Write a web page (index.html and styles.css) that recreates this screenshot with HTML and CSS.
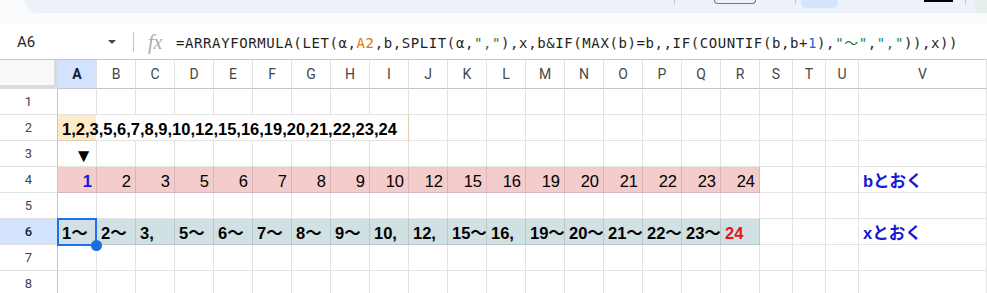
FILE: index.html
```html
<!DOCTYPE html>
<html lang="ja">
<head>
<meta charset="utf-8">
<title>Sheet</title>
<link rel="stylesheet" href="styles.css">
</head>
<body>
<div class="topbar">
  <div class="tbpill">
    <span class="tb-div d1"></span>
    <span class="tb-box"></span>
    <span class="tb-div d2"></span>
    <span class="tb-sel"></span>
    <span class="tb-black"></span>
    <span class="tb-div d3"></span>
    <span class="tb-end"></span>
  </div>
</div>
<div class="fbar">
  <div class="namebox">A6</div>
  <span class="dd"></span>
  <span class="fdiv"></span>
  <span class="fx">fx</span>
  <div class="formula">=ARRAYFORMULA(LET(α,<span class="ref">A2</span>,b,SPLIT(α,<span class="str">","</span>),x,b&amp;IF(MAX(b)=b,,IF(COUNTIF(b,b+<span class="num">1</span>),<span class="str">"〜"</span>,<span class="str">","</span>)),x))</div>
</div>
<div class="sheet">
  <!-- header row -->
  <div class="corner"></div>
  <div class="ch on">A</div><div class="ch">B</div><div class="ch">C</div><div class="ch">D</div><div class="ch">E</div><div class="ch">F</div><div class="ch">G</div><div class="ch">H</div><div class="ch">I</div><div class="ch">J</div><div class="ch">K</div><div class="ch">L</div><div class="ch">M</div><div class="ch">N</div><div class="ch">O</div><div class="ch">P</div><div class="ch">Q</div><div class="ch">R</div><div class="ch">S</div><div class="ch">T</div><div class="ch">U</div><div class="ch">V</div>

  <!-- row 1 -->
  <div class="rh">1</div>
  <div class="c"></div><div class="c"></div><div class="c"></div><div class="c"></div><div class="c"></div><div class="c"></div><div class="c"></div><div class="c"></div><div class="c"></div><div class="c"></div><div class="c"></div><div class="c"></div><div class="c"></div><div class="c"></div><div class="c"></div><div class="c"></div><div class="c"></div><div class="c"></div><div class="c"></div><div class="c"></div><div class="c"></div><div class="c"></div>

  <!-- row 2 -->
  <div class="rh">2</div>
  <div class="c src b">1,2,3,5,6,7,8,9,10,12,15,16,19,20,21,22,23,24</div>
  <div class="c"></div><div class="c"></div><div class="c"></div><div class="c"></div><div class="c"></div><div class="c"></div><div class="c"></div><div class="c"></div><div class="c"></div><div class="c"></div><div class="c"></div><div class="c"></div><div class="c"></div>

  <!-- row 3 -->
  <div class="rh">3</div>
  <div class="c r tri">▼</div>
  <div class="c"></div><div class="c"></div><div class="c"></div><div class="c"></div><div class="c"></div><div class="c"></div><div class="c"></div><div class="c"></div><div class="c"></div><div class="c"></div><div class="c"></div><div class="c"></div><div class="c"></div><div class="c"></div><div class="c"></div><div class="c"></div><div class="c"></div><div class="c"></div><div class="c"></div><div class="c"></div><div class="c"></div>

  <!-- row 4 -->
  <div class="rh">4</div>
  <div class="c pk r b blue">1</div><div class="c pk r">2</div><div class="c pk r">3</div><div class="c pk r">5</div><div class="c pk r">6</div><div class="c pk r">7</div><div class="c pk r">8</div><div class="c pk r">9</div><div class="c pk r">10</div><div class="c pk r">12</div><div class="c pk r">15</div><div class="c pk r">16</div><div class="c pk r">19</div><div class="c pk r">20</div><div class="c pk r">21</div><div class="c pk r">22</div><div class="c pk r">23</div><div class="c pk r">24</div>
  <div class="c"></div><div class="c"></div><div class="c"></div>
  <div class="c b blue">bとおく</div>

  <!-- row 5 -->
  <div class="rh">5</div>
  <div class="c"></div><div class="c"></div><div class="c"></div><div class="c"></div><div class="c"></div><div class="c"></div><div class="c"></div><div class="c"></div><div class="c"></div><div class="c"></div><div class="c"></div><div class="c"></div><div class="c"></div><div class="c"></div><div class="c"></div><div class="c"></div><div class="c"></div><div class="c"></div><div class="c"></div><div class="c"></div><div class="c"></div><div class="c"></div>

  <!-- row 6 -->
  <div class="rh on">6</div>
  <div class="c cy b a6">1〜<span class="sel"><span class="handle"></span></span></div><div class="c cy b">2〜</div><div class="c cy b">3,</div><div class="c cy b">5〜</div><div class="c cy b">6〜</div><div class="c cy b">7〜</div><div class="c cy b">8〜</div><div class="c cy b">9〜</div><div class="c cy b">10,</div><div class="c cy b">12,</div><div class="c cy b">15〜</div><div class="c cy b">16,</div><div class="c cy b">19〜</div><div class="c cy b">20〜</div><div class="c cy b">21〜</div><div class="c cy b">22〜</div><div class="c cy b">23〜</div><div class="c cy b red">24</div>
  <div class="c"></div><div class="c"></div><div class="c"></div>
  <div class="c b blue">xとおく</div>

  <!-- row 7 -->
  <div class="rh">7</div>
  <div class="c"></div><div class="c"></div><div class="c"></div><div class="c"></div><div class="c"></div><div class="c"></div><div class="c"></div><div class="c"></div><div class="c"></div><div class="c"></div><div class="c"></div><div class="c"></div><div class="c"></div><div class="c"></div><div class="c"></div><div class="c"></div><div class="c"></div><div class="c"></div><div class="c"></div><div class="c"></div><div class="c"></div><div class="c"></div>

  <!-- row 8 -->
  <div class="rh">8</div>
  <div class="c"></div><div class="c"></div><div class="c"></div><div class="c"></div><div class="c"></div><div class="c"></div><div class="c"></div><div class="c"></div><div class="c"></div><div class="c"></div><div class="c"></div><div class="c"></div><div class="c"></div><div class="c"></div><div class="c"></div><div class="c"></div><div class="c"></div><div class="c"></div><div class="c"></div><div class="c"></div><div class="c"></div><div class="c"></div>
</div>
</body>
</html>
```
FILE: styles.css
```css
* { box-sizing: border-box; }
html, body { margin: 0; padding: 0; }
body {
  width: 987px;
  height: 293px;
  overflow: hidden;
  background: #f9fbfd;
  font-family: Roboto, "Noto Sans", sans-serif;
  color: #1f1f1f;
}

/* top toolbar remnant */
.topbar { height: 24px; padding-left: 25px; }
.tbpill {
  height: 13px;
  background: #edf2fa;
  border-bottom-left-radius: 14px;
  display: flex;
  align-items: flex-start;
}
.tb-div { width: 1px; height: 4px; background: #c4c7c5; flex: none; }
.d1 { margin-left: 649px; }
.tb-box {
  margin-left: 39px; width: 42px; height: 4px; flex: none;
  border: 1px solid #747775; border-top: none;
  border-radius: 0 0 6px 6px;
}
.d2 { margin-left: 39px; }
.tb-sel {
  margin-left: 5px; width: 37px; height: 8px; flex: none;
  background: #d3e3fd; border-radius: 0 0 6px 6px;
}
.tb-black { margin-left: 86px; width: 29px; height: 2px; background: #000; flex: none; }
.d3 { margin-left: 12px; }
.tb-end { margin-left: 9px; width: 14px; height: 13px; background: #e6efec; flex: none; }

/* formula bar */
.fbar {
  height: 35px;
  background: #fff;
  display: flex;
  align-items: center;
  white-space: nowrap;
}
.namebox { width: 108px; padding-left: 17px; font-size: 15px; color: #1f1f1f; flex: none; }
.dd {
  width: 0; height: 0; flex: none;
  border-left: 4px solid transparent;
  border-right: 4px solid transparent;
  border-top: 4px solid #444746;
}
.fdiv { margin-left: 17px; width: 1px; height: 20px; background: #c4c7c5; flex: none; }
.fx {
  margin-left: 14px; width: 16px; flex: none;
  font-family: "Liberation Serif", serif;
  font-style: italic; font-size: 20px; color: #a8abae;
  line-height: 20px;
}
.formula {
  margin-left: 12px;
  font-family: "DejaVu Sans Mono", "Noto Sans CJK JP", monospace;
  font-size: 14px;
  letter-spacing: 0.6px;
  color: #1f1f1f;
}
.ref { color: #e8710a; }
.str { color: #188038; }
.num { color: #1967d2; }

/* sheet grid */
.sheet {
  display: grid;
  grid-template-columns: 58px repeat(18, 39px) repeat(3, 33px) 1fr;
  grid-template-rows: 30px repeat(8, 26px);
  background: #fff;
}
.corner {
  background: #f8f9fa;
  border-right: 4px solid #d9dbdd;
  border-bottom: 4px solid #d9dbdd;
  border-top: 1px solid #c4c7c5;
}
.ch {
  display: flex; align-items: center; justify-content: center;
  border-top: 1px solid #c4c7c5;
  border-right: 1px solid #e1e3e1;
  border-bottom: 1px solid #c4c7c5;
  font-size: 14px; color: #444746;
}
.rh {
  display: flex; align-items: center; justify-content: center;
  border-right: 1px solid #c4c7c5;
  border-bottom: 1px solid #e1e3e1;
  font-size: 13px; color: #444746;
}
.ch.on, .rh.on { background: #d3e3fd; color: #0b1f3a; font-weight: 700; }
.rh.on { font-weight: 500; }

.c {
  display: flex;
  align-items: flex-end;
  padding: 0 4px 1px;
  border-right: 1px solid rgba(0, 0, 0, 0.11);
  border-bottom: 1px solid rgba(0, 0, 0, 0.11);
  font-family: "Liberation Sans", "Noto Sans CJK JP", sans-serif;
  font-size: 16.5px;
  line-height: 19px;
  color: #000;
  white-space: nowrap;
  overflow: hidden;
}
.c.r { justify-content: flex-end; }
.c.b { font-weight: 700; }
.c.tri { font-size: 19px; padding-right: 3px; }
.c.src {
  grid-column: span 9;
  background: linear-gradient(to right, #fdeac6 38px, transparent 38px);
}
.c.pk { background: #f4cccc; }
.c.cy { background: #d0e0e3; }
.blue { color: #1717d4 !important; }
.red { color: #e5161b !important; }

/* selection on A6 */
.c.a6 { position: relative; overflow: visible; }
.sel {
  position: absolute;
  left: -1px; top: -1px; right: -1px; bottom: -2px;
  border: 2px solid #1a73e8;
  z-index: 2;
  pointer-events: none;
}
.handle {
  position: absolute;
  right: -7px; bottom: -7px;
  width: 11px; height: 11px;
  border-radius: 50%;
  background: #1a6ed8;
}
```
